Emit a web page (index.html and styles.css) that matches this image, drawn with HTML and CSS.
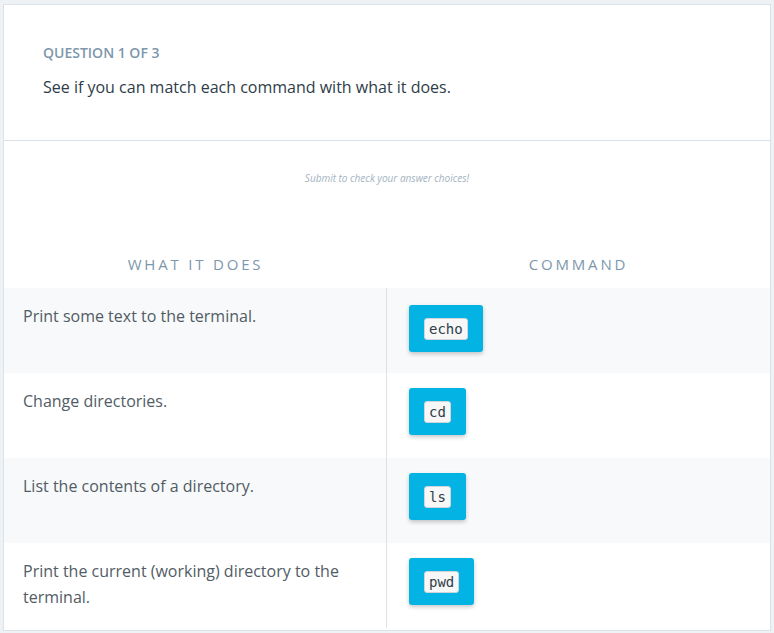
FILE: index.html
```html
<!DOCTYPE html>
<html>
<head>
<meta charset="utf-8">
<link rel="stylesheet" href="styles.css">
</head>
<body>
<div class="card">
  <div class="question">
    <div class="label">Question 1 of 3</div>
    <div class="prompt">See if you can match each command with what it does.</div>
  </div>
  <div class="hint">Submit to check your answer choices!</div>
  <div class="table">
    <div class="head">What it does</div>
    <div class="head">Command</div>

    <div class="desc alt">Print some text to the terminal.</div>
    <div class="cmd alt first"><span class="btn"><code>echo</code></span></div>

    <div class="desc">Change directories.</div>
    <div class="cmd"><span class="btn"><code>cd</code></span></div>

    <div class="desc alt">List the contents of a directory.</div>
    <div class="cmd alt"><span class="btn"><code>ls</code></span></div>

    <div class="desc">Print the current (working) directory to the terminal.</div>
    <div class="cmd"><span class="btn"><code>pwd</code></span></div>
  </div>
</div>
</body>
</html>
```

FILE: styles.css
```css
html, body {
  margin: 0;
  padding: 0;
}
body {
  background: #eff2f4;
  font-family: "Open Sans", "Noto Sans", sans-serif;
  padding: 4px 3px 3px 3px;
}
.card {
  background: #ffffff;
  border: 1px solid #dbe2e8;
  box-sizing: border-box;
  height: 627px;
  overflow: hidden;
}
.question {
  height: 136px;
  box-sizing: border-box;
  padding: 40px 39px 0 39px;
  border-bottom: 1px solid #dbe2e8;
}
.label {
  font-size: 14px;
  line-height: 16px;
  font-weight: 600;
  color: #7d97ad;
  text-transform: uppercase;
}
.prompt {
  margin-top: 14px;
  font-size: 16px;
  line-height: 24px;
  color: #2e3d49;
}
.hint {
  height: 99px;
  box-sizing: border-box;
  padding-top: 30px;
  text-align: center;
  font-size: 10px;
  line-height: 14px;
  font-style: italic;
  color: #a3b3c2;
}
.table {
  display: grid;
  grid-template-columns: 383px 1fr;
  grid-auto-rows: 85px;
  grid-template-rows: 48px;
}
.head {
  text-align: center;
  font-size: 15px;
  line-height: 48px;
  letter-spacing: 2.8px;
  color: #7d97ad;
  text-transform: uppercase;
}
.desc {
  padding: 15px 40px 0 19px;
  font-size: 16px;
  line-height: 26px;
  color: #525c65;
  border-right: 1px solid #dbe2e8;
}
.cmd {
  padding: 15px 0 0 22px;
}
.cmd.first {
  padding-top: 17px;
}
.alt {
  background: #f7f9fa;
}
.btn {
  display: inline-flex;
  align-items: center;
  height: 47px;
  box-sizing: border-box;
  padding: 0 15px;
  background: #02b3e4;
  border-radius: 3px;
  box-shadow: 0 2px 4px rgba(0, 0, 0, 0.22);
}
code {
  display: inline-block;
  font-family: "DejaVu Sans Mono", "Liberation Mono", monospace;
  font-size: 14px;
  line-height: 18px;
  padding: 1px 4px;
  background: #f7f7f7;
  border: 1px solid #cfd5da;
  border-radius: 3px;
  color: #2e3d49;
}
```
